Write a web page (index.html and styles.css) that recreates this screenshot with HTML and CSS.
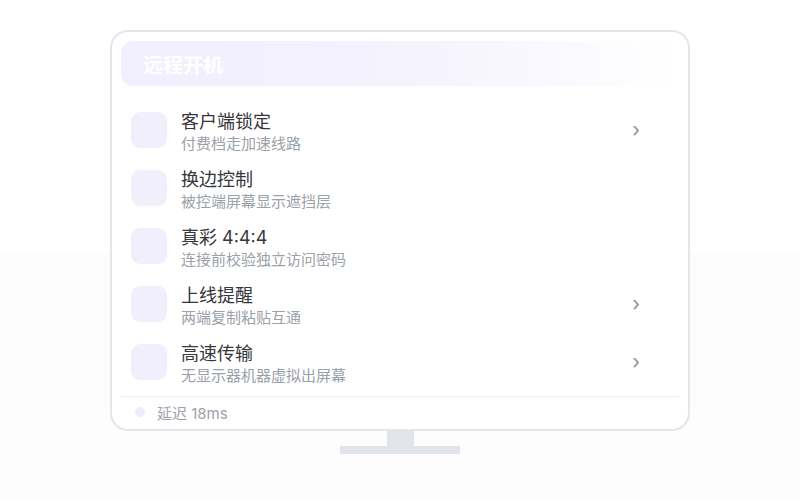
FILE: index.html
```html
<!DOCTYPE html>
<html lang="zh">
<head>
<meta charset="utf-8">
<link rel="stylesheet" href="styles.css">
</head>
<body>
<main class="scene">
  <div class="monitor">
    <div class="header">远程开机</div>
    <ul class="list">
      <li class="row">
        <span class="ico"></span>
        <div class="txt"><div class="title">客户端锁定</div><div class="sub">付费档走加速线路</div></div>
        <span class="chev">›</span>
      </li>
      <li class="row">
        <span class="ico"></span>
        <div class="txt"><div class="title">换边控制</div><div class="sub">被控端屏幕显示遮挡层</div></div>
      </li>
      <li class="row">
        <span class="ico"></span>
        <div class="txt"><div class="title">真彩 4:4:4</div><div class="sub">连接前校验独立访问密码</div></div>
      </li>
      <li class="row">
        <span class="ico"></span>
        <div class="txt"><div class="title">上线提醒</div><div class="sub">两端复制粘贴互通</div></div>
        <span class="chev">›</span>
      </li>
      <li class="row">
        <span class="ico"></span>
        <div class="txt"><div class="title">高速传输</div><div class="sub">无显示器机器虚拟出屏幕</div></div>
        <span class="chev">›</span>
      </li>
    </ul>
    <div class="footer"><span class="dot"></span><span class="lat">延迟 18ms</span></div>
  </div>
  <div class="neck"></div>
  <div class="base"></div>
</main>
</body>
</html>
```
FILE: styles.css
```css
* { box-sizing: border-box; }
html, body { margin: 0; padding: 0; }
body {
  width: 800px;
  height: 500px;
  overflow: hidden;
  background: linear-gradient(to bottom, #ffffff 0, #ffffff 253px, #fdfdfd 253px, #fdfdfd 100%);
  font-family: "Inter", "Noto Sans CJK SC", sans-serif;
}
.scene {
  display: flex;
  flex-direction: column;
  align-items: center;
  padding-top: 30px;
}
.monitor {
  width: 580px;
  height: 401px;
  border: 2px solid #e4e6ea;
  border-radius: 18px;
  background: #ffffff;
  padding: 9px 9px 0;
  display: flex;
  flex-direction: column;
}
.header {
  height: 45px;
  border-radius: 12px;
  background: linear-gradient(to right, #f2effe 0%, #f5f3fe 55%, rgba(248,247,255,0) 100%);
  color: #ffffff;
  font-weight: 700;
  font-size: 20px;
  line-height: 45px;
  padding: 3px 0 0 22px;
}
.list {
  list-style: none;
  margin: 15px 0 0;
  padding: 0 0 0 10px;
}
.row {
  height: 58px;
  display: flex;
  align-items: center;
}
.ico {
  width: 36px;
  height: 36px;
  border-radius: 9px;
  background: #f2effd;
  flex: none;
}
.txt {
  margin-left: 14px;
  flex: 1;
  padding-top: 5px;
}
.title {
  font-size: 18px;
  line-height: 22px;
  color: #36363b;
}
.sub {
  font-size: 15px;
  line-height: 21px;
  color: #9ba1a9;
}
.chev {
  width: 20px;
  margin-right: 33px;
  color: #8c929b;
  font-size: 20px;
  line-height: 20px;
  text-align: center;
}
.footer {
  margin-top: 5px;
  border-top: 1px solid #eceef1;
  flex: 1;
  display: flex;
  align-items: center;
  padding: 0 0 2px 14px;
}
.dot {
  width: 10px;
  height: 10px;
  border-radius: 50%;
  background: #eeebfc;
}
.lat {
  margin-left: 12px;
  font-size: 15px;
  color: #9ca2aa;
}
.neck {
  width: 27px;
  height: 15px;
  background: #e1e4e8;
}
.base {
  width: 120px;
  height: 8px;
  background: #e1e4e8;
}
```
